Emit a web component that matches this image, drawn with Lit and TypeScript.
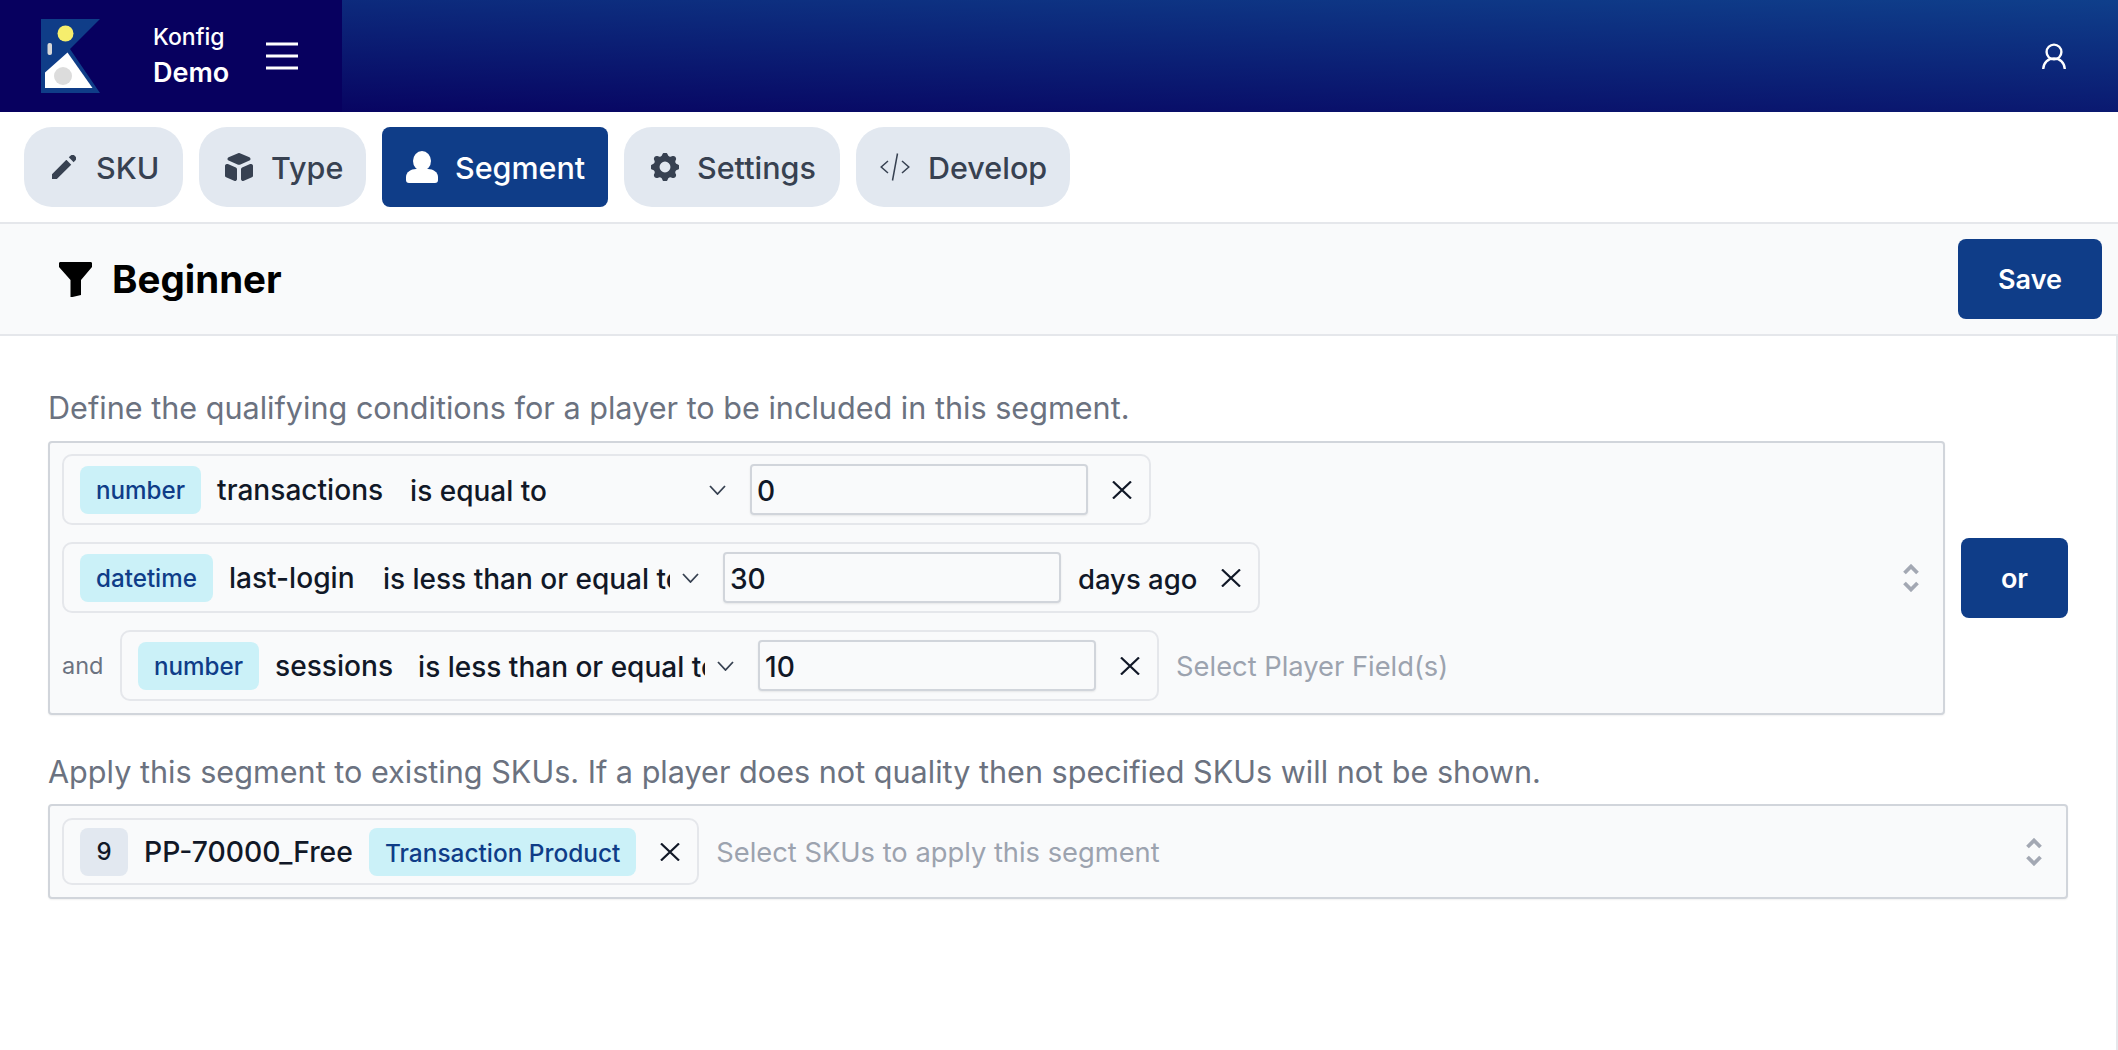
import { LitElement, html, css, svg } from "lit";
import { customElement } from "lit/decorators.js";

const closeIcon = html`<svg class="close" viewBox="0 0 20 18" width="20" height="18">
  <path d="M1 0.5 19 17.5M19 0.5 1 17.5" fill="none" stroke="#111827" stroke-width="2.2" />
</svg>`;

const chevron = html`<svg class="chev" viewBox="0 0 17 10" width="17" height="10">
  <path d="M1 1 8.5 9 16 1" fill="none" stroke="#374151" stroke-width="1.8" />
</svg>`;

const stepper = html`<svg class="stepper" viewBox="0 0 16 28" width="16" height="28">
  <path d="M1.500 9 8 2.500 14.500 9M1.500 19 8 25.500 14.500 19" fill="none" stroke="#a3a8b3" stroke-width="3.800" />
</svg>`;

const tabIcons: Record<string, unknown> = {
  SKU: svg`<svg class="ic" viewBox="3 3 14 14" width="24" height="24" fill="currentColor">
    <path d="M13.586 3.586a2 2 0 112.828 2.828l-.793.793-2.828-2.828.793-.793zM11.379 5.793L3 14.172V17h2.828l8.38-8.379-2.83-2.828z" />
  </svg>`,
  Type: svg`<svg class="ic" viewBox="3 2 14 16" width="28" height="28" preserveAspectRatio="none" fill="currentColor">
    <path d="M11 17a1 1 0 001.447.894l4-2A1 1 0 0017 15V9.236a1 1 0 00-1.447-.894l-4 2a1 1 0 00-.553.894V17zM15.211 6.276a1 1 0 000-1.788l-4.764-2.382a1 1 0 00-.894 0L4.789 4.488a1 1 0 000 1.788l4.764 2.382a1 1 0 00.894 0l4.764-2.382zM4.447 8.342A1 1 0 003 9.236V15a1 1 0 00.553.894l4 2A1 1 0 009 17v-5.764a1 1 0 00-.553-.894l-4-2z" />
  </svg>`,
  Segment: svg`<svg class="ic" viewBox="0 0 32 32" width="32" height="32" fill="currentColor">
    <ellipse cx="16" cy="10" rx="9" ry="10" />
    <path d="M0 29v-3c0-5 5-8 10-8h12c5 0 10 3 10 8v3c0 2-1 3-3 3H3c-2 0-3-1-3-3z" />
  </svg>`,
  Settings: svg`<svg class="ic" viewBox="2.300 2.300 15.400 15.400" width="28" height="28" fill="currentColor">
    <path fill-rule="evenodd" d="M11.49 3.17c-.38-1.56-2.6-1.56-2.98 0a1.532 1.532 0 01-2.286.948c-1.372-.836-2.942.734-2.106 2.106.54.886.061 2.042-.947 2.287-1.561.379-1.561 2.6 0 2.978a1.532 1.532 0 01.947 2.287c-.836 1.372.734 2.942 2.106 2.106a1.532 1.532 0 012.287.947c.379 1.561 2.6 1.561 2.978 0a1.533 1.533 0 012.287-.947c1.372.836 2.942-.734 2.106-2.106a1.533 1.533 0 01.947-2.287c1.561-.379 1.561-2.6 0-2.978a1.532 1.532 0 01-.947-2.287c.836-1.372-.734-2.942-2.106-2.106a1.532 1.532 0 01-2.287-.947zM10 13a3 3 0 100-6 3 3 0 000 6z" />
  </svg>`,
  Develop: svg`<svg class="ic" viewBox="0 0 30 28" width="30" height="28" fill="none" stroke="currentColor" stroke-width="1.500">
    <path d="M8 8 1.200 14 8 20M22 8 28.800 14 22 20M17.500 0.500 12.500 27.500" />
  </svg>`,
};

@customElement("app-root")
export class AppRoot extends LitElement {
  static styles = css`
    :host {
      display: block;
      width: 2118px;
      height: 1050px;
      overflow: hidden;
      background: #fff;
      font-family: Inter, "Liberation Sans", sans-serif;
      color: #111827;
    }

    .top {
      height: 112px;
      display: flex;
      justify-content: space-between;
      align-items: center;
      background: linear-gradient(182deg, #0f3f8b, #07005f);
    }

    .brand {
      width: 342px;
      height: 112px;
      background: #07005f;
      display: flex;
      align-items: center;
      color: #fff;
    }

    .logo {
      margin-left: 41px;
    }

    .names {
      margin-left: 53px;
      margin-top: -2px;
      display: flex;
      flex-direction: column;
      gap: 2px;
    }

    .konfig {
      font-size: 23px;
      line-height: 34px;
      font-weight: 500;
    }

    .demo {
      font-size: 27px;
      line-height: 34px;
      font-weight: 600;
    }

    .burger {
      margin-left: 37px;
    }

    .account {
      margin-right: 52px;
    }

    .tabs {
      display: flex;
      gap: 16px;
      padding: 15px 24px;
      height: 80px;
      border-bottom: 2px solid #e5e7eb;
    }

    .tab {
      display: flex;
      align-items: center;
      box-sizing: border-box;
      background: #e2e8f0;
      color: #374151;
      border-radius: 28px;
      font-size: 30.500px;
      font-weight: 450;
      height: 80px;
    }

    .tab.active {
      background: #0f3d88;
      color: #fff;
      border-radius: 8px;
    }

    .tab .ic {
      flex: none;
    }

    .title-bar {
      height: 110px;
      display: flex;
      align-items: center;
      justify-content: space-between;
      background: #f9fafb;
      border-bottom: 2px solid #e5e7eb;
      padding: 0 16px 0 59px;
    }

    .title {
      display: flex;
      align-items: center;
      gap: 20px;
      font-size: 38.500px;
      font-weight: 700;
      color: #000;
    }

    .btn {
      background: #0f3d88;
      color: #fff;
      font-size: 27px;
      font-weight: 600;
      height: 80px;
      border-radius: 8px;
      display: flex;
      align-items: center;
      justify-content: center;
    }

    .save {
      width: 144px;
    }

    .or {
      width: 107px;
      flex: none;
    }

    .main {
      height: 714px;
      padding: 52px 0 0 48px;
      box-sizing: border-box;
      border-right: 2px solid #e5e7eb;
    }

    .desc {
      font-size: 30.600px;
      line-height: 40px;
      color: #6b7280;
      margin-bottom: 13px;
    }

    .desc.second {
      margin-top: 37px;
      margin-bottom: 12px;
    }

    .group {
      width: 2020px;
      display: flex;
      align-items: center;
      gap: 16px;
    }

    .box {
      flex: 1;
      box-sizing: border-box;
      display: flex;
      align-items: center;
      justify-content: space-between;
      background: #f9fafb;
      border: 2px solid #d1d5db;
      border-radius: 4px;
      box-shadow: 0 1px 2px rgba(0, 0, 0, 0.06);
    }

    .conditions {
      padding: 11px 24px 12px 12px;
    }

    .skus {
      padding: 12px 24px 12px 12px;
    }

    .rows {
      display: flex;
      flex-direction: column;
      gap: 17px;
    }

    .line {
      display: flex;
      align-items: center;
    }

    .and {
      font-size: 23.500px;
      color: #6b7280;
      width: 58px;
    }

    .cond {
      display: flex;
      align-items: center;
      height: 71px;
      box-sizing: border-box;
      border: 2px solid #e5e7eb;
      border-radius: 10px;
      padding: 0 17px 0 16px;
      font-size: 28.100px;
      font-weight: 450;
    }

    .chip {
      height: 48px;
      box-sizing: border-box;
      display: flex;
      align-items: center;
      padding: 2px 16px 0;
      border-radius: 8px;
      background: #cbf1f8;
      color: #0f3d88;
      font-size: 24.200px;
      font-weight: 500;
    }

    .field {
      margin-left: 16px;
      padding-top: 1px;
      white-space: nowrap;
    }

    .suffix {
      margin-left: 17px;
      padding-top: 2px;
      font-size: 27.500px;
      white-space: nowrap;
    }

    .select {
      width: 337px;
      margin: 0 16px;
      padding: 2px 0 0 13px;
      box-sizing: border-box;
      display: flex;
      align-items: center;
      font-size: 28px;
    }

    .select span {
      width: 287px;
      flex: none;
      overflow: hidden;
      white-space: nowrap;
    }

    .chev {
      margin-left: 12px;
      margin-top: -2px;
      flex: none;
    }

    .input {
      width: 338px;
      height: 51px;
      box-sizing: border-box;
      border: 2px solid #d1d5db;
      border-radius: 4px;
      padding: 2px 5px 0;
      display: flex;
      align-items: center;
      box-shadow: 0 1px 2px rgba(0, 0, 0, 0.08);
    }

    .close {
      margin-left: 24px;
      flex: none;
    }

    .placeholder {
      margin-left: 17px;
      padding-top: 2px;
      color: #9ca3af;
      font-size: 27.300px;
      white-space: nowrap;
    }

    .sku {
      height: 67px;
    }

    .sku .field {
      font-size: 28.300px;
      width: 209px;
    }

    .sku .chip {
      margin-left: 16px;
      font-size: 24.400px;
    }

    .num {
      height: 48px;
      width: 48px;
      display: flex;
      align-items: center;
      justify-content: center;
      border-radius: 8px;
      background: #e2e8f0;
      font-size: 24px;
      font-weight: 500;
    }
  `;

  renderCond(type: string, field: string, fieldWidth: number, op: string, value: string, suffix = "") {
    return html`<div class="cond">
      <div class="chip">${type}</div>
      <div class="field" style="width: ${fieldWidth}px">${field}</div>
      <div class="select"><span>${op}</span>${chevron}</div>
      <div class="input">${value}</div>
      ${suffix ? html`<div class="suffix">${suffix}</div>` : ""}
      ${closeIcon}
    </div>`;
  }

  render() {
    const tabs = [
      { name: "SKU", width: 159, pad: 28, gap: 20 },
      { name: "Type", width: 167, pad: 26, gap: 18 },
      { name: "Segment", width: 226, pad: 24, gap: 17 },
      { name: "Settings", width: 216, pad: 27, gap: 18 },
      { name: "Develop", width: 214, pad: 24, gap: 18 },
    ];
    return html`
      <div class="top">
        <div class="brand">
          <svg class="logo" viewBox="0 0 59 74" width="59" height="74">
            <path d="M0 0H59L29 30 59 74H0Z" fill="#0f3d88" />
            <path d="M26.500 33.500 51.500 69H4V53.500Z" fill="#fff" />
            <circle cx="22" cy="57" r="9" fill="#dcdcdc" />
            <circle cx="24.500" cy="14.500" r="8" fill="#f6ee6d" />
            <rect x="6.500" y="24" width="4.500" height="12" rx="2" fill="#d8d8d8" />
          </svg>
          <div class="names">
            <div class="konfig">Konfig</div>
            <div class="demo">Demo</div>
          </div>
          <svg class="burger" viewBox="0 0 32 28" width="32" height="28">
            <path d="M0 2H32M0 14H32M0 26H32" stroke="#fff" stroke-width="3" />
          </svg>
        </div>
        <svg class="account" viewBox="0 0 24 26" width="24" height="26" fill="none" stroke="#fff" stroke-width="2.400">
          <circle cx="12" cy="9" r="7.400" />
          <path d="M1.200 26C1.500 19.500 6 15.500 12 15.500S22.500 19.500 22.800 26" />
        </svg>
      </div>

      <div class="tabs">
        ${tabs.map(
          (t) => html`<div
            class="tab ${t.name === "Segment" ? "active" : ""}"
            style="width: ${t.width}px; padding-left: ${t.pad}px; gap: ${t.gap}px"
          >
            ${tabIcons[t.name]}<span>${t.name}</span>
          </div>`
        )}
      </div>

      <div class="title-bar">
        <div class="title">
          <svg viewBox="0 0 33 35" width="33" height="35">
            <path d="M1.500 0H31.500C32.500 0 33 .6 33 1.500V5L22 18V33L13.500 35H11.500V18L0 5V1.500C0 .6.5 0 1.500 0Z" fill="#000" />
          </svg>
          Beginner
        </div>
        <div class="btn save">Save</div>
      </div>

      <div class="main">
        <div class="desc">Define the qualifying conditions for a player to be included in this segment.</div>
        <div class="group">
          <div class="box conditions">
            <div class="rows">
              <div class="line">${this.renderCond("number", "transactions", 164, "is equal to", "0")}</div>
              <div class="line">
                ${this.renderCond("datetime", "last-login", 125, "is less than or equal to", "30", "days ago")}
              </div>
              <div class="line">
                <div class="and">and</div>
                ${this.renderCond("number", "sessions", 114, "is less than or equal to", "10")}
                <div class="placeholder">Select Player Field(s)</div>
              </div>
            </div>
            ${stepper}
          </div>
          <div class="btn or">or</div>
        </div>
        <div class="desc second">
          Apply this segment to existing SKUs. If a player does not quality then specified SKUs will not be shown.
        </div>
        <div class="group">
          <div class="box skus">
            <div class="line">
              <div class="cond sku">
                <div class="num">9</div>
                <div class="field">PP-70000_Free</div>
                <div class="chip">Transaction Product</div>
                ${closeIcon}
              </div>
              <div class="placeholder">Select SKUs to apply this segment</div>
            </div>
            ${stepper}
          </div>
        </div>
      </div>
    `;
  }
}
